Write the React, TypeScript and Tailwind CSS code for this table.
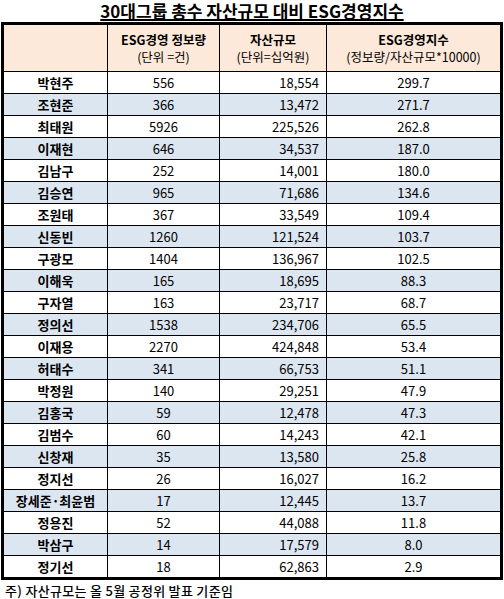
import React from "react";

const rows: [string, string, string, string][] = [
  ["박현주", "556", "18,554", "299.7"],
  ["조현준", "366", "13,472", "271.7"],
  ["최태원", "5926", "225,526", "262.8"],
  ["이재현", "646", "34,537", "187.0"],
  ["김남구", "252", "14,001", "180.0"],
  ["김승연", "965", "71,686", "134.6"],
  ["조원태", "367", "33,549", "109.4"],
  ["신동빈", "1260", "121,524", "103.7"],
  ["구광모", "1404", "136,967", "102.5"],
  ["이해욱", "165", "18,695", "88.3"],
  ["구자열", "163", "23,717", "68.7"],
  ["정의선", "1538", "234,706", "65.5"],
  ["이재용", "2270", "424,848", "53.4"],
  ["허태수", "341", "66,753", "51.1"],
  ["박정원", "140", "29,251", "47.9"],
  ["김홍국", "59", "12,478", "47.3"],
  ["김범수", "60", "14,243", "42.1"],
  ["신창재", "35", "13,580", "25.8"],
  ["정지선", "26", "16,027", "16.2"],
  ["장세준·최윤범", "17", "12,445", "13.7"],
  ["정용진", "52", "44,088", "11.8"],
  ["박삼구", "14", "17,579", "8.0"],
  ["정기선", "18", "62,863", "2.9"],
];

const font = { fontFamily: '"Noto Sans CJK KR", "Noto Sans", sans-serif' };

export default function App() {
  return (
    <div className="w-[504px] h-[599px] bg-white text-black overflow-hidden" style={font}>
      <div className="h-[22px] flex items-start justify-center pt-[1px]">
        <span className="text-[17px] leading-[19px] font-bold underline underline-offset-[1px] decoration-[1.5px]">
          30대그룹 총수 자산규모 대비 ESG경영지수
        </span>
      </div>
      <div className="ml-[1px] w-[502px] border-[3px] border-black">
        <div className="grid grid-cols-[104px_112px_107px_173px] h-[47px] bg-[#FDE9D9] border-b border-black">
          <div className="border-r border-black" />
          <div className="border-r border-black flex flex-col items-center justify-center text-[12.5px] leading-[17px]">
            <span className="font-bold">ESG경영 정보량</span>
            <span>(단위 =건)</span>
          </div>
          <div className="border-r border-black flex flex-col items-center justify-center text-[12.5px] leading-[17px]">
            <span className="font-bold">자산규모</span>
            <span>(단위=십억원)</span>
          </div>
          <div className="flex flex-col items-center justify-center text-[12.5px] leading-[17px]">
            <span className="font-bold">ESG경영지수</span>
            <span>(정보량/자산규모*10000)</span>
          </div>
        </div>
        {rows.map((r, i) => {
          const last = i === rows.length - 1;
          const bg = i % 2 === 1 ? "bg-[#DCE6F1]" : "bg-white";
          return (
            <div
              key={i}
              className={`grid grid-cols-[104px_112px_107px_173px] ${bg} ${last ? "h-[21px]" : "h-[22px] border-b border-black"} text-[13px]`}
            >
              <div className="border-r border-black flex items-center justify-center font-bold">{r[0]}</div>
              <div className="border-r border-black flex items-center justify-center">{r[1]}</div>
              <div className="border-r border-black flex items-center justify-end pr-[7px]">{r[2]}</div>
              <div className="flex items-center justify-center">{r[3]}</div>
            </div>
          );
        })}
      </div>
      <div className="pl-[5px] mt-[3px] text-[13px] leading-[16px] font-medium tracking-[0.3px]">
        주) 자산규모는 올 5월 공정위 발표 기준임
      </div>
    </div>
  );
}
